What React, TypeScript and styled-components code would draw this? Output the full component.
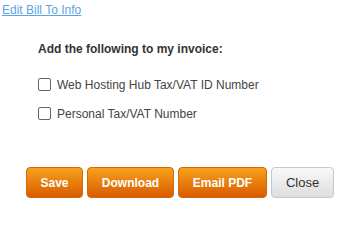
import React from "react";
import styled, { createGlobalStyle } from "styled-components";

const Global = createGlobalStyle`
  html, body { margin: 0; padding: 0; background: #fff; }
  body { font-family: "Liberation Sans", Arial, sans-serif; font-size: 12px; color: #333; }
`;

const Page = styled.div`
  display: flex;
  flex-direction: column;
  padding: 3px 0 0 2px;
  width: 338px;
  height: 204px;
  box-sizing: border-box;
`;

const EditLink = styled.a`
  color: #58a6e4;
  text-decoration: underline;
  font-size: 12px;
  line-height: 14px;
  align-self: flex-start;
  cursor: pointer;
`;

const Options = styled.div`
  display: flex;
  flex-direction: column;
  padding-left: 36px;
  margin-top: 25px;
`;

const Heading = styled.div`
  font-weight: bold;
  font-size: 12px;
  line-height: 14px;
  color: #333;
`;

const CheckRow = styled.label<{ $first?: boolean }>`
  display: flex;
  align-items: center;
  gap: 6px;
  height: 13px;
  margin-top: ${(p) => (p.$first ? "22px" : "16px")};
  font-size: 12px;
  color: #444;
`;

const Box = styled.span`
  width: 11px;
  height: 11px;
  border: 1px solid #666;
  border-radius: 2px;
  background: #fff;
  flex: none;
`;

const Buttons = styled.div`
  display: flex;
  gap: 4px;
  margin-top: 47px;
  padding-left: 24px;
`;

const Btn = styled.button<{ $w: number; $variant?: "orange" | "grey" }>`
  width: ${(p) => p.$w}px;
  height: 31px;
  box-sizing: border-box;
  border-radius: 4px;
  font-family: "Liberation Sans", Arial, sans-serif;
  padding: 0;
  cursor: pointer;
  ${(p) =>
    p.$variant === "grey"
      ? `
    color: #333;
    font-weight: normal;
    font-size: 13px;
    border: 1px solid #c8c8c8;
    background: linear-gradient(#f8f8f8, #dedede);
  `
      : `
    color: #fff;
    font-weight: bold;
    font-size: 12px;
    border: 1px solid #d26a08;
    background: linear-gradient(#f7a11c, #d95b00);
  `}
`;

export default function App() {
  return (
    <>
      <Global />
      <Page>
        <EditLink>Edit Bill To Info</EditLink>
        <Options>
          <Heading>Add the following to my invoice:</Heading>
          <CheckRow $first>
            <Box />
            Web Hosting Hub Tax/VAT ID Number
          </CheckRow>
          <CheckRow>
            <Box />
            Personal Tax/VAT Number
          </CheckRow>
        </Options>
        <Buttons>
          <Btn $w={57}>Save</Btn>
          <Btn $w={87}>Download</Btn>
          <Btn $w={89}>Email PDF</Btn>
          <Btn $w={63} $variant="grey">Close</Btn>
        </Buttons>
      </Page>
    </>
  );
}
